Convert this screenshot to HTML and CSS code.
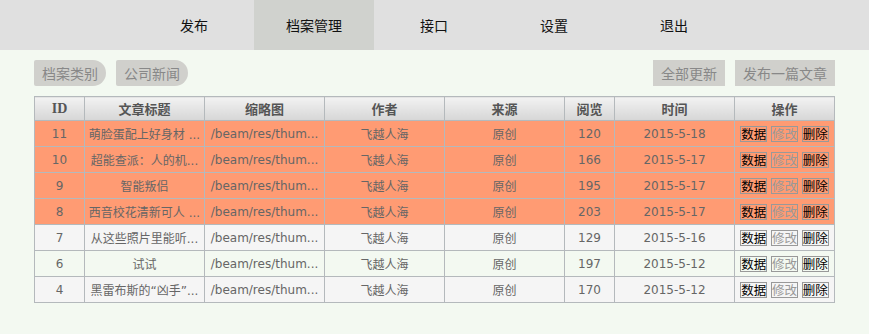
FILE: index.html
```html
<!DOCTYPE html>
<html lang="zh-CN">
<head>
  <meta charset="UTF-8" />
  <title>档案管理</title>
  <link rel="stylesheet" href="styles.css">
</head>
<body>
  <div class="nav">
    <a class="nav-item">发布</a>
    <a class="nav-item active">档案管理</a>
    <a class="nav-item">接口</a>
    <a class="nav-item">设置</a>
    <a class="nav-item">退出</a>
  </div>

  <div class="main">
    <div class="toolbar">
      <div class="tabs">
        <span class="tab">档案类别</span>
        <span class="tab">公司新闻</span>
      </div>
      <div class="actions">
        <span class="action">全部更新</span>
        <span class="action">发布一篇文章</span>
      </div>
    </div>

    <table class="list">
      <colgroup>
        <col class="c-s"><col class="c-l"><col class="c-l"><col class="c-l">
        <col class="c-l"><col class="c-s"><col class="c-l"><col class="c-m">
      </colgroup>
      <thead>
        <tr>
          <th>ID</th><th>文章标题</th><th>缩略图</th><th>作者</th><th>来源</th><th>阅览</th><th>时间</th><th>操作</th>
        </tr>
      </thead>
      <tbody>
        <tr class="hot">
          <td>11</td><td>萌脸蛋配上好身材 ...</td><td>/beam/res/thum...</td><td>飞越人海</td><td>原创</td><td>120</td><td>2015-5-18</td>
          <td class="ops"><span class="op">数据</span> <span class="op off">修改</span> <span class="op">删除</span></td>
        </tr>
        <tr class="hot">
          <td>10</td><td>超能查派：人的机...</td><td>/beam/res/thum...</td><td>飞越人海</td><td>原创</td><td>166</td><td>2015-5-17</td>
          <td class="ops"><span class="op">数据</span> <span class="op off">修改</span> <span class="op">删除</span></td>
        </tr>
        <tr class="hot">
          <td>9</td><td>智能叛侣</td><td>/beam/res/thum...</td><td>飞越人海</td><td>原创</td><td>195</td><td>2015-5-17</td>
          <td class="ops"><span class="op">数据</span> <span class="op off">修改</span> <span class="op">删除</span></td>
        </tr>
        <tr class="hot">
          <td>8</td><td>西音校花清新可人 ...</td><td>/beam/res/thum...</td><td>飞越人海</td><td>原创</td><td>203</td><td>2015-5-17</td>
          <td class="ops"><span class="op">数据</span> <span class="op off">修改</span> <span class="op">删除</span></td>
        </tr>
        <tr class="odd">
          <td>7</td><td>从这些照片里能听...</td><td>/beam/res/thum...</td><td>飞越人海</td><td>原创</td><td>129</td><td>2015-5-16</td>
          <td class="ops"><span class="op">数据</span> <span class="op off">修改</span> <span class="op">删除</span></td>
        </tr>
        <tr class="even">
          <td>6</td><td>试试</td><td>/beam/res/thum...</td><td>飞越人海</td><td>原创</td><td>197</td><td>2015-5-12</td>
          <td class="ops"><span class="op">数据</span> <span class="op off">修改</span> <span class="op">删除</span></td>
        </tr>
        <tr class="odd">
          <td>4</td><td>黑雷布斯的“凶手”...</td><td>/beam/res/thum...</td><td>飞越人海</td><td>原创</td><td>170</td><td>2015-5-12</td>
          <td class="ops"><span class="op">数据</span> <span class="op off">修改</span> <span class="op">删除</span></td>
        </tr>
      </tbody>
    </table>
  </div>
</body>
</html>
```

FILE: styles.css
```css
body {
  margin: 0;
  background: #f3f9f1;
  font-family: "DejaVu Sans", "Noto Sans CJK SC", sans-serif;
  color: #666;
}

.nav {
  height: 50px;
  padding-right: 1px;
  background: #e0e0e0;
  display: flex;
  justify-content: center;
}

.nav-item {
  width: 120px;
  line-height: 50px;
  text-align: center;
  font-size: 14px;
  color: #111;
  font-family: "Noto Sans CJK SC", sans-serif;
}

.nav-item.active {
  background: #d0d2ce;
}

.main {
  width: 801px;
  margin: 0 auto;
  padding-top: 10px;
}

.toolbar {
  display: flex;
  justify-content: space-between;
  margin-bottom: 10px;
}

.tabs, .actions {
  display: flex;
  gap: 10px;
}

.tab, .action {
  height: 26px;
  line-height: 26px;
  padding: 0 8px;
  font-size: 14px;
  color: #888;
  background: #d0d0cc;
  font-family: "Noto Sans CJK SC", sans-serif;
}

.tab {
  border-radius: 2px 13px 13px 2px;
}

.list {
  width: 801px;
  border-collapse: collapse;
  table-layout: fixed;
  font-size: 12px;
}

.c-s { width: 50px; }
.c-m { width: 100px; }
.c-l { width: 120px; }

.list th, .list td {
  border: 1px solid #b4b9bc;
  text-align: center;
  white-space: nowrap;
  overflow: hidden;
  padding: 0;
}

.list th {
  height: 23px;
  background: linear-gradient(#f2f2f2, #d6d6d6);
  color: #555;
  font-family: "Liberation Serif", "Noto Sans CJK SC", serif;
  font-size: 14px;
}

.list th + th {
  font-size: 13px;
}

.list td {
  height: 25px;
}

.list tr.hot td {
  background: #ff9b73;
}

.list tr.odd td {
  background: #f5f5f5;
}

.list tr.even td {
  background: #f3f9f1;
}

.op {
  display: inline-block;
  width: 25px;
  height: 14px;
  line-height: 14px;
  border: 1px solid #999;
  font-size: 12.5px;
  color: #000;
  font-family: "Noto Sans CJK SC", sans-serif;
  vertical-align: middle;
}

.op.off {
  color: #999;
}
```
